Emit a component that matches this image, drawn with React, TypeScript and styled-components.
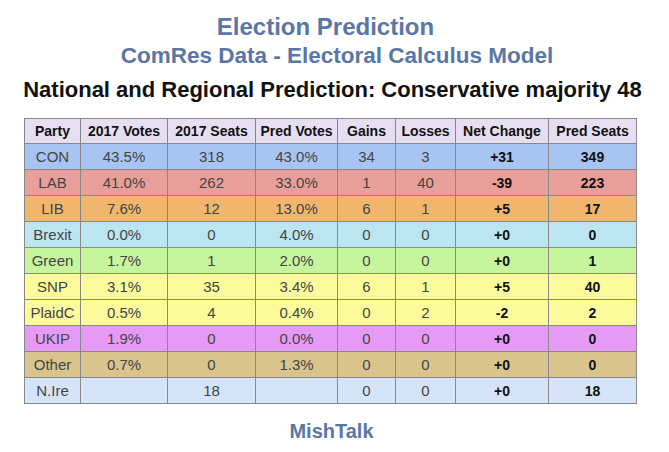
import React from "react";
import styled, { createGlobalStyle } from "styled-components";

const GlobalStyle = createGlobalStyle`
  html, body {
    margin: 0;
    padding: 0;
    background: #ffffff;
  }
  body {
    font-family: "Liberation Sans", Arial, sans-serif;
  }
`;

type Row = {
  party: string;
  votes17: string;
  seats17: string;
  predVotes: string;
  gains: string;
  losses: string;
  net: string;
  predSeats: string;
  color: string;
};

const rows: Row[] = [
  { party: "CON", votes17: "43.5%", seats17: "318", predVotes: "43.0%", gains: "34", losses: "3", net: "+31", predSeats: "349", color: "#a7c4f2" },
  { party: "LAB", votes17: "41.0%", seats17: "262", predVotes: "33.0%", gains: "1", losses: "40", net: "-39", predSeats: "223", color: "#e99f99" },
  { party: "LIB", votes17: "7.6%", seats17: "12", predVotes: "13.0%", gains: "6", losses: "1", net: "+5", predSeats: "17", color: "#f1b66d" },
  { party: "Brexit", votes17: "0.0%", seats17: "0", predVotes: "4.0%", gains: "0", losses: "0", net: "+0", predSeats: "0", color: "#bce5f2" },
  { party: "Green", votes17: "1.7%", seats17: "1", predVotes: "2.0%", gains: "0", losses: "0", net: "+0", predSeats: "1", color: "#c7f59d" },
  { party: "SNP", votes17: "3.1%", seats17: "35", predVotes: "3.4%", gains: "6", losses: "1", net: "+5", predSeats: "40", color: "#fbfb9c" },
  { party: "PlaidC", votes17: "0.5%", seats17: "4", predVotes: "0.4%", gains: "0", losses: "2", net: "-2", predSeats: "2", color: "#fbfb9c" },
  { party: "UKIP", votes17: "1.9%", seats17: "0", predVotes: "0.0%", gains: "0", losses: "0", net: "+0", predSeats: "0", color: "#e59bf6" },
  { party: "Other", votes17: "0.7%", seats17: "0", predVotes: "1.3%", gains: "0", losses: "0", net: "+0", predSeats: "0", color: "#d9c48e" },
  { party: "N.Ire", votes17: "", seats17: "18", predVotes: "", gains: "0", losses: "0", net: "+0", predSeats: "18", color: "#d6e4fa" },
];

const headers = ["Party", "2017 Votes", "2017 Seats", "Pred Votes", "Gains", "Losses", "Net Change", "Pred Seats"];
const widths = [56, 87, 88, 82, 58, 60, 93, 88];

const Page = styled.div`
  width: 669px;
  height: 452px;
  display: flex;
  flex-direction: column;
  align-items: center;
  padding-top: 12px;
  box-sizing: border-box;
`;

const TitleLine = styled.div<{ $size: number; $shift: number }>`
  font-size: ${({ $size }) => $size}px;
  line-height: 29px;
  font-weight: bold;
  color: #5a76a5;
  text-align: center;
  padding-right: ${({ $shift }) => Math.max(0, $shift)}px;
  padding-left: ${({ $shift }) => Math.max(0, -$shift)}px;
`;

const Subtitle = styled.h2`
  margin: 8px 0 0;
  font-size: 22px;
  line-height: 24px;
  font-weight: bold;
  color: #111111;
  text-align: center;
  padding-right: 4px;
`;

const Table = styled.table`
  align-self: flex-start;
  margin: 16px 0 0 24px;
  border-collapse: collapse;
  table-layout: fixed;
  border: 1px solid #333333;
  font-size: 14px;
  color: #333333;
`;

const HeadCell = styled.th`
  height: 24px;
  padding: 0;
  background: #e6dff2;
  border: 1px solid #888888;
  font-weight: bold;
  color: #111111;
  text-align: center;
`;

const BodyRow = styled.tr<{ $bg: string }>`
  background: ${({ $bg }) => $bg};
`;

const Cell = styled.td<{ $strong?: boolean }>`
  height: 25px;
  padding: 0;
  border: 1px solid #888888;
  text-align: center;
  font-size: ${({ $strong }) => ($strong ? "14px" : "15px")};
  font-weight: ${({ $strong }) => ($strong ? "bold" : "normal")};
  color: ${({ $strong }) => ($strong ? "#111111" : "#444444")};
`;

const Footer = styled.div`
  margin-top: 16px;
  font-size: 20px;
  font-weight: bold;
  color: #5a76a5;
  padding-right: 6px;
`;

export default function App() {
  return (
    <>
      <GlobalStyle />
      <Page>
        <TitleLine $size={24} $shift={18}>Election Prediction</TitleLine>
        <TitleLine $size={22.5} $shift={-5}>ComRes Data - Electoral Calculus Model</TitleLine>
        <Subtitle>National and Regional Prediction: Conservative majority 48</Subtitle>
        <Table>
          <colgroup>
            {widths.map((w, i) => (
              <col key={i} style={{ width: w }} />
            ))}
          </colgroup>
          <thead>
            <tr>
              {headers.map((h) => (
                <HeadCell key={h}>{h}</HeadCell>
              ))}
            </tr>
          </thead>
          <tbody>
            {rows.map((r) => (
              <BodyRow key={r.party} $bg={r.color}>
                <Cell>{r.party}</Cell>
                <Cell>{r.votes17}</Cell>
                <Cell>{r.seats17}</Cell>
                <Cell>{r.predVotes}</Cell>
                <Cell>{r.gains}</Cell>
                <Cell>{r.losses}</Cell>
                <Cell $strong>{r.net}</Cell>
                <Cell $strong>{r.predSeats}</Cell>
              </BodyRow>
            ))}
          </tbody>
        </Table>
        <Footer>MishTalk</Footer>
      </Page>
    </>
  );
}
